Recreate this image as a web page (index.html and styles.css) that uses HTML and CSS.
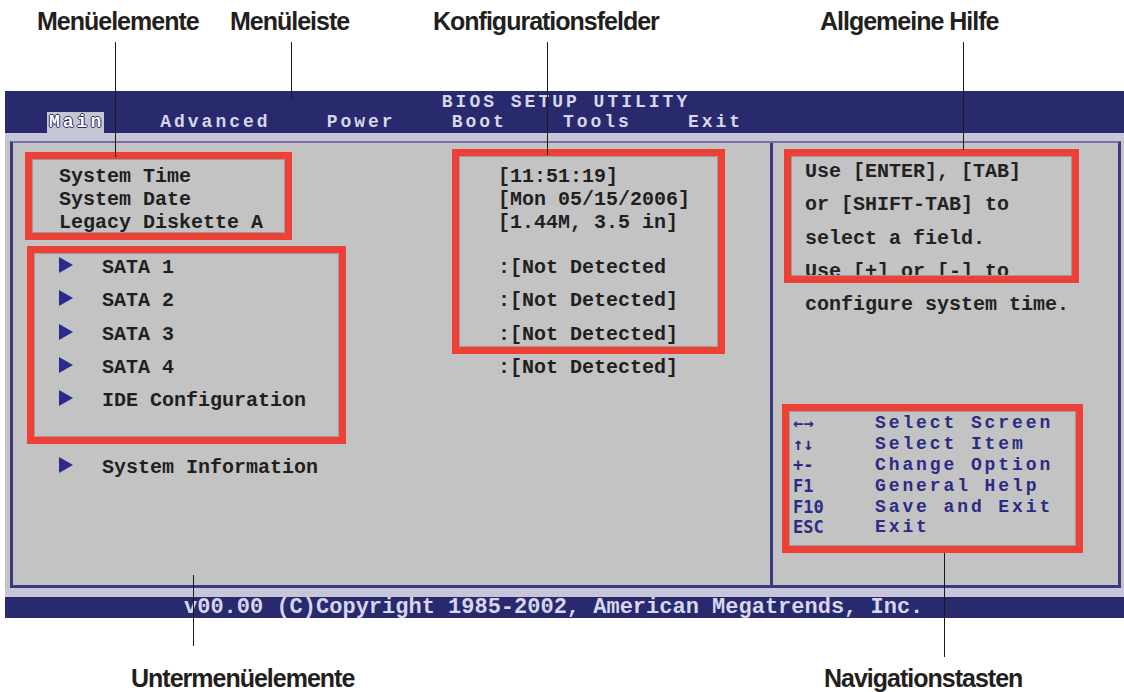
FILE: index.html
```html
<!DOCTYPE html>
<html>
<head>
    <meta charset="utf-8" />
    <title>BIOS Setup Utility</title>
    <link rel="stylesheet" href="styles.css">
</head>
<body>
    <div class="page">
        <div class="labels-top">
            <span>Menüelemente</span>
            <span>Menüleiste</span>
            <span>Konfigurationsfelder</span>
            <span>Allgemeine Hilfe</span>
        </div>

        <div class="screen">
            <div class="bios-head">
                <div class="bios-title">BIOS SETUP UTILITY</div>
                <div class="tabs">
                    <span class="tab active">Main</span>
                    <span class="tab">Advanced</span>
                    <span class="tab">Power</span>
                    <span class="tab">Boot</span>
                    <span class="tab">Tools</span>
                    <span class="tab">Exit</span>
                </div>
            </div>
            <div class="stripe"></div>
            <div class="frame">
                <div class="main-col">
                    <div class="row"><span class="item">System Time</span><span class="val">[11:51:19]</span></div>
                    <div class="row"><span class="item">System Date</span><span class="val">[Mon 05/15/2006]</span></div>
                    <div class="row"><span class="item">Legacy Diskette A</span><span class="val">[1.44M, 3.5 in]</span></div>

                    <div class="row sub first"><span class="item"><i class="arrow"></i>SATA 1</span><span class="val">:[Not Detected</span></div>
                    <div class="row sub"><span class="item"><i class="arrow"></i>SATA 2</span><span class="val">:[Not Detected]</span></div>
                    <div class="row sub"><span class="item"><i class="arrow"></i>SATA 3</span><span class="val">:[Not Detected]</span></div>
                    <div class="row sub"><span class="item"><i class="arrow"></i>SATA 4</span><span class="val">:[Not Detected]</span></div>
                    <div class="row sub"><span class="item"><i class="arrow"></i>IDE Configuration</span></div>
                    <div class="row sub spaced"><span class="item"><i class="arrow"></i>System Information</span></div>
                </div>
                <div class="help-col">
                    <p class="help">Use [ENTER], [TAB]<br>or [SHIFT-TAB] to<br>select a field.<br>Use [+] or [-] to<br>configure system time.</p>
                    <div class="keys">
                        <div class="key-row"><span class="key">←→</span><span>Select Screen</span></div>
                        <div class="key-row"><span class="key">↑↓</span><span>Select Item</span></div>
                        <div class="key-row"><span class="key">+-</span><span>Change Option</span></div>
                        <div class="key-row"><span class="key">F1</span><span>General Help</span></div>
                        <div class="key-row"><span class="key">F10</span><span>Save and Exit</span></div>
                        <div class="key-row"><span class="key">ESC</span><span>Exit</span></div>
                    </div>
                </div>
            </div>
            <div class="band"></div>
            <div class="bios-foot">v00.00 (C)Copyright 1985-2002, American Megatrends, Inc.</div>
        </div>

        <div class="labels-bottom">
            <span>Untermenüelemente</span>
            <span>Navigationstasten</span>
        </div>

        <!-- annotation boxes and leader lines -->
        <div class="callout c-items"></div>
        <div class="callout c-sub"></div>
        <div class="callout c-fields"></div>
        <div class="callout c-help"></div>
        <div class="callout c-keys"></div>

        <div class="leader ld-items"></div>
        <div class="leader ld-bar"></div>
        <div class="leader ld-fields"></div>
        <div class="leader ld-help"></div>
        <div class="leader ld-sub"></div>
        <div class="leader ld-keys"></div>
    </div>
</body>
</html>
```

FILE: styles.css
```css
body {
    margin: 0;
    background-color: #fff;
    font-family: "Liberation Sans", Arial, sans-serif;
}

.page {
    position: relative;
    width: 1124px;
    height: 692px;
    overflow: hidden;
}

/* callout labels */
.labels-top, .labels-bottom {
    display: grid;
    font-size: 25px;
    font-weight: bold;
    letter-spacing: -1px;
    line-height: 25px;
    color: #231f20;
}

.labels-top {
    grid-template-columns: 193px 203px 387px auto;
    padding: 9px 0 0 37px;
    height: 82px;
}

.labels-bottom {
    grid-template-columns: 693px auto;
    padding-left: 131px;
    margin-top: 48px;
}

/* bios screen */
.screen {
    margin-left: 5px;
    background-color: #c3c3c3;
    font-family: "Liberation Mono", "DejaVu Sans Mono", monospace;
    font-weight: bold;
}

.bios-head {
    box-sizing: border-box;
    height: 42px;
    padding-top: 1px;
    background-color: #29296e;
    color: #d6d6ec;
    font-size: 18px;
    letter-spacing: 3px;
}

.bios-title {
    padding-left: 3px;
    text-align: center;
    line-height: 20px;
}

.tabs {
    display: flex;
    gap: 56px;
    height: 21px;
    padding-left: 42px;
    line-height: 21px;
}

.tab.active {
    padding: 0 0 0 2px;
    background-color: #c6c6ce;
    color: #fff;
    text-shadow: 1px 0 #29296e, -1px 0 #29296e, 0 1px #29296e, 0 -1px #29296e;
}

.stripe {
    height: 8px;
    background-color: #c5c6da;
}

.frame {
    display: flex;
    height: 442px;
    margin: 0 3px 0 5px;
    border: 3px solid #3a3a82;
    border-top: 2px solid #7474a4;
}

.main-col {
    box-sizing: border-box;
    width: 760px;
    padding: 22px 0 0 46px;
    border-right: 3px solid #3a3a82;
    font-size: 20px;
    color: #1f1f1f;
}

.row {
    display: flex;
    line-height: 23px;
}

.item {
    width: 439px;
}

.row.sub {
    line-height: 33.3px;
}

    .row.sub .item {
        display: flex;
        align-items: center;
    }

.row.first {
    margin-top: 17px;
}

.row.spaced {
    margin-top: 33.3px;
}

.arrow {
    width: 0;
    height: 0;
    margin: 0 29px 5px 0;
    border-left: 14px solid #2b2b8c;
    border-top: 8px solid transparent;
    border-bottom: 8px solid transparent;
}

.help-col {
    flex: 1;
    padding: 12px 0 0 20px;
    font-size: 20px;
    color: #222;
}

.help {
    margin: 0;
    padding-left: 12px;
    line-height: 33.3px;
}

.keys {
    margin-top: 92px;
    font-size: 18px;
    letter-spacing: 2.9px;
    line-height: 20.8px;
    color: #2b2b85;
}

.key-row {
    display: flex;
}

.key {
    width: 82px;
    font-family: "DejaVu Sans Mono", monospace;
    font-size: 17px;
    letter-spacing: 0;
}

.band {
    height: 9px;
    background-color: #c6c6d8;
}

.bios-foot {
    height: 21px;
    padding-left: 179px;
    background-color: #29296e;
    color: #d6d6ec;
    font-size: 22px;
    line-height: 21px;
}

/* annotation overlay */
.callout {
    position: absolute;
    box-sizing: border-box;
    border: 7px solid #ef4036;
    box-shadow: inset 0 0 0 1px #9c9c9c;
}

.c-items { left: 25px; top: 152px; width: 267px; height: 88px; }
.c-sub { left: 27px; top: 246px; width: 319px; height: 198px; }
.c-fields { left: 452px; top: 149px; width: 273px; height: 205px; }
.c-help { left: 784px; top: 149px; width: 295px; height: 134px; }
.c-keys { left: 782px; top: 404px; width: 301px; height: 149px; }

.leader {
    position: absolute;
    width: 1px;
    background-color: #1a1a1a;
}

.ld-items { left: 115px; top: 42px; height: 115px; }
.ld-bar { left: 291px; top: 42px; height: 56px; }
.ld-fields { left: 547px; top: 42px; height: 113px; }
.ld-help { left: 963px; top: 42px; height: 108px; }
.ld-sub { left: 193px; top: 575px; height: 71px; }
.ld-keys { left: 944px; top: 553px; height: 104px; }
```
